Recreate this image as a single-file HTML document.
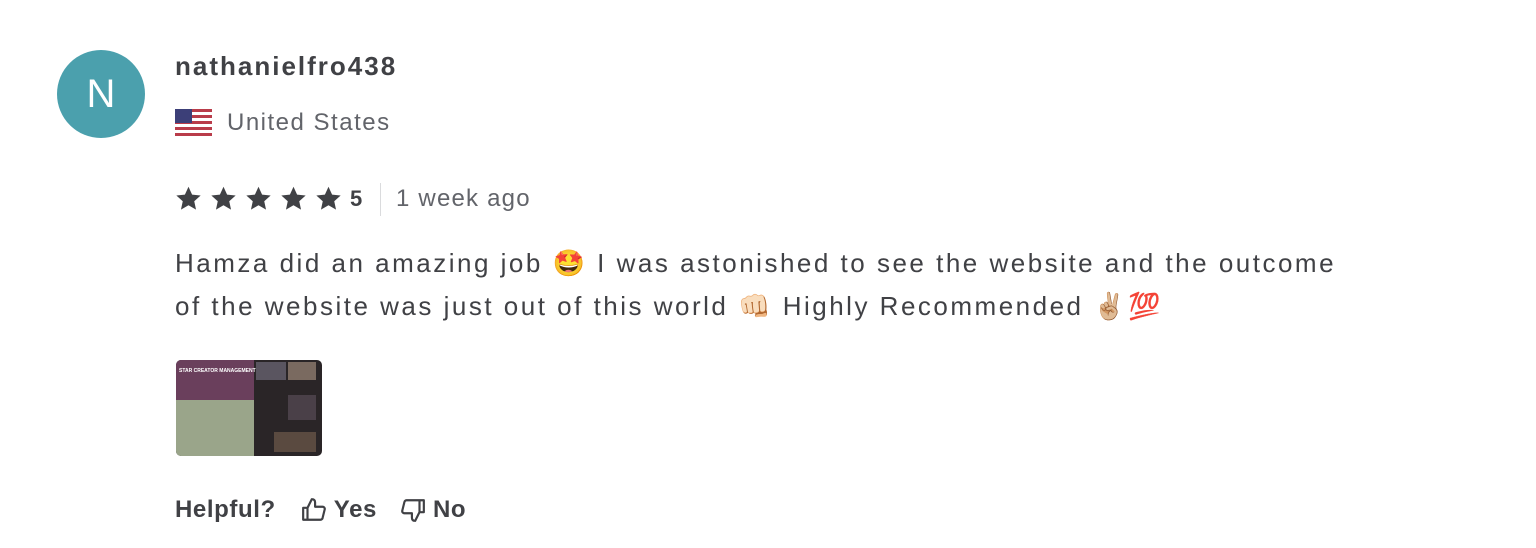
<!DOCTYPE html>
<html><head><meta charset="utf-8"><style>
body{margin:0;width:1536px;height:548px;background:#fff;font-family:"Liberation Sans",sans-serif;color:#404145;position:relative;overflow:hidden}
.abs{position:absolute}
.av{left:57px;top:50px;width:88px;height:88px;border-radius:50%;background:#4ba0ad;color:#fff;font-size:40px;line-height:88px;text-align:center}
.name{left:175px;top:51px;font-size:26px;font-weight:bold;color:#404145;letter-spacing:2px}
.country{left:227px;top:109px;font-size:24px;color:#62646a;letter-spacing:1.5px}
.stars{left:175px;top:185px;display:flex;align-items:center}
.star{width:27px;height:27px;margin-right:8px}
.rate{font-size:22px;font-weight:bold;margin-left:0px}
.div{left:380px;top:183px;width:1px;height:33px;background:#dadbdd}
.ago{left:396px;top:185px;font-size:24px;color:#62646a;letter-spacing:1.2px}
.body{left:175px;top:242px;font-size:26px;line-height:43px;color:#404145;width:1300px;letter-spacing:2.5px;white-space:nowrap}
.img{left:176px;top:360px;width:146px;height:96px;border-radius:5px;overflow:hidden;background:#2a2527}
.help{left:175px;top:496px;font-size:24px;font-weight:bold;display:flex;align-items:center;letter-spacing:0.6px}
</style></head><body>
<div class="abs av">N</div>
<div class="abs name">nathanielfro438</div>
<svg class="abs" style="left:175px;top:109px" width="37" height="27" viewBox="0 0 37 27">
<rect width="37" height="27" rx="3" fill="#fff"/>
<g fill="#b93c4a"><rect y="0" width="37" height="3"/><rect y="6" width="37" height="3"/><rect y="12" width="37" height="3"/><rect y="18" width="37" height="3"/><rect y="24" width="37" height="3"/></g>
<rect width="17" height="14" fill="#3c3f78"/></svg>
<div class="abs country">United States</div>
<div class="abs stars">
<svg class="star" viewBox="0 0 24 24"><path fill="#404145" d="M12 1.5l3.2 7 7.6.8-5.7 5.1 1.6 7.5L12 18l-6.7 3.9 1.6-7.5L1.2 9.3l7.6-.8z"/></svg>
<svg class="star" viewBox="0 0 24 24"><path fill="#404145" d="M12 1.5l3.2 7 7.6.8-5.7 5.1 1.6 7.5L12 18l-6.7 3.9 1.6-7.5L1.2 9.3l7.6-.8z"/></svg>
<svg class="star" viewBox="0 0 24 24"><path fill="#404145" d="M12 1.5l3.2 7 7.6.8-5.7 5.1 1.6 7.5L12 18l-6.7 3.9 1.6-7.5L1.2 9.3l7.6-.8z"/></svg>
<svg class="star" viewBox="0 0 24 24"><path fill="#404145" d="M12 1.5l3.2 7 7.6.8-5.7 5.1 1.6 7.5L12 18l-6.7 3.9 1.6-7.5L1.2 9.3l7.6-.8z"/></svg>
<svg class="star" viewBox="0 0 24 24"><path fill="#404145" d="M12 1.5l3.2 7 7.6.8-5.7 5.1 1.6 7.5L12 18l-6.7 3.9 1.6-7.5L1.2 9.3l7.6-.8z"/></svg>
<span class="rate">5</span></div>
<div class="abs div"></div>
<div class="abs ago">1 week ago</div>
<div class="abs body">Hamza did an amazing job 🤩 I was astonished to see the website and the outcome<br>of the website was just out of this world 👊🏻 Highly Recommended ✌🏼💯</div>
<div class="abs img">
<div class="abs" style="left:0;top:0;width:78px;height:40px;background:#6a3f5c"></div>
<div class="abs" style="left:3px;top:8px;font-size:5px;color:#fff;font-weight:bold">STAR CREATOR MANAGEMENT</div>
<div class="abs" style="left:0;top:40px;width:78px;height:56px;background:#9aa58a"></div>
<div class="abs" style="left:80px;top:2px;width:30px;height:18px;background:#5a5560"></div>
<div class="abs" style="left:112px;top:2px;width:28px;height:18px;background:#7a6a60"></div>
<div class="abs" style="left:112px;top:35px;width:28px;height:25px;background:#4a4048"></div>
<div class="abs" style="left:98px;top:72px;width:42px;height:20px;background:#5a4a40"></div>
</div>
<div class="abs help">Helpful?
<svg style="margin-left:24px" width="28" height="26" viewBox="0 0 24 24" fill="none" stroke="#404145" stroke-width="2" stroke-linejoin="round"><path d="M2 10h4v11H2zM6 10l4-8c2 0 3 1 3 3v4h7c1 0 2 1 2 2l-2 8c0 1-1 2-2 2H6"/></svg>
<span style="margin-left:6px">Yes</span>
<svg style="margin-left:22px" width="28" height="26" viewBox="0 0 24 24" fill="none" stroke="#404145" stroke-width="2" stroke-linejoin="round"><path d="M22 14h-4V3h4zM18 14l-4 8c-2 0-3-1-3-3v-4H4c-1 0-2-1-2-2l2-8c0-1 1-2 2-2h12"/></svg>
<span style="margin-left:6px">No</span></div>
</body></html>
